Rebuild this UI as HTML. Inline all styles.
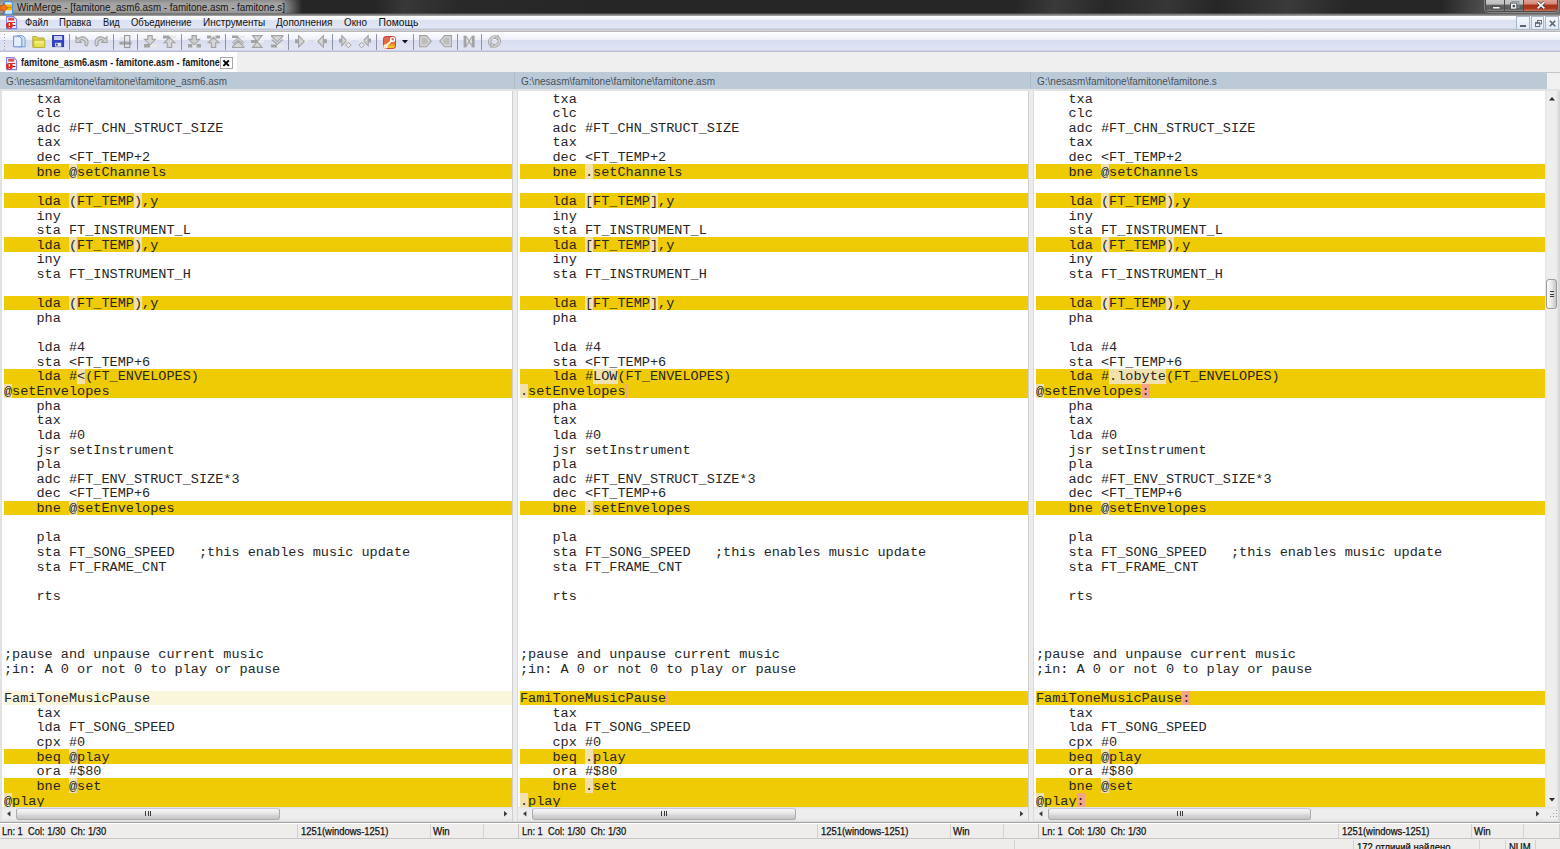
<!DOCTYPE html>
<html><head><meta charset="utf-8">
<style>
*{box-sizing:border-box}
html,body{margin:0;padding:0}
body{width:1560px;height:849px;overflow:hidden;position:relative;background:#f0f0f0;font-family:"Liberation Sans",sans-serif}
.a{position:absolute}
svg{position:absolute;overflow:visible}
#title{left:0;top:0;width:1560px;height:16px;background:linear-gradient(100deg,#262626 0,#262626 370px,#383838 400px,#2a2a2a 450px,#262626 600px,#262626 1000px,#3a3a3a 1040px,#282828 1090px,#363636 1150px,#262626 1200px,#3a3a3a 1270px,#262626 1330px,#262626 1420px,#606060 1480px,#707070 1560px)}
#glow{left:0;top:0;width:302px;height:14px;background:linear-gradient(to right,rgba(38,38,38,0) 0,rgba(38,38,38,0) 93%,#262626 100%),linear-gradient(#8c8c8c 0,#a2a2a2 25%,#a8a8a8 60%,#909090 100%)}
#tbot{left:0;top:13.3px;width:1560px;height:2.4px;background:linear-gradient(rgba(50,50,50,.35),#858585 55%,#a8a8a8)}
.tx{position:absolute;white-space:pre;line-height:12px;transform-origin:0 0}
#menubar{left:0;top:15.5px;width:1560px;height:14.6px;background:linear-gradient(#ffffff 0,#f0f2fb 28%,#dce1f2 31%,#e2e6f4 86%,#b9bfd5 94%,#c8ccd8 100%)}
#mline{left:0;top:30.1px;width:1560px;height:1.6px;background:linear-gradient(#dedede,#ababab)}
.mi{top:16.5px;font-size:10.3px;color:#111}
#toolbar{left:0;top:31.7px;width:1560px;height:20px;background:linear-gradient(#ffffff 0,#eef0fb 38%,#d9ddf0 40%,#e0e4f3 90%,#b4bad0 96%,#c4c8d6 100%)}
.sep{position:absolute;top:34px;width:1px;height:16px;background:#8a92a4}
#tabbar{left:0;top:51.7px;width:1560px;height:20.6px;background:#efefef}
#tab{left:0;top:51.7px;width:237px;height:20.6px;background:#fff}
#tabtext{left:20.6px;top:56.9px;width:228px;overflow:hidden;font-size:10.3px;font-weight:bold;color:#1a1a1a;transform:scaleX(.88)}
#tabx{left:220.4px;top:57.2px;width:12.3px;height:12.3px;border:1px solid #a8a8a8;background:#fff}
#hdr{left:0;top:72.3px;width:1547px;height:16.7px;background:#bccad8}
#hdr2{left:1547px;top:72.3px;width:13px;height:1px;background:#c4c4c4}
.hdiv{position:absolute;top:72.3px;width:1px;height:16.7px;background:#aebdcb}
.htxt{top:74.96px;font-size:10.8px;color:#46515c}
#hgap{left:0;top:89px;width:1560px;height:1.7px;background:#e3e3e3}
.pw{position:absolute;top:90.7px;height:717px;background:#fff}
.psep{position:absolute;top:90.7px;height:732px}
.pane{position:absolute;top:91px;height:716px;overflow:hidden}
.bg{position:absolute;left:0;right:0;height:14.625px}
.y{background:#efcb05}
.c{background:#f9f6dc}
.w{position:absolute;height:14.625px;background:#f1e2ad}
.p{position:absolute;height:14.625px;background:#f3a38a}
.m{position:absolute;height:14.625px;width:1px;background:#f3a38a}
.t{position:absolute;left:0;white-space:pre;font-family:"Liberation Mono",monospace;font-size:12px;line-height:14.625px;color:#262626;transform:scaleX(1.12826);transform-origin:0 0}
#vsb{left:1545px;top:90.7px;width:13px;height:716.5px;background:linear-gradient(to right,#e4e4e4,#eeeeee 20%,#eeeeee 80%,#e4e4e4)}
#rborder{left:1558px;top:90.7px;width:2px;height:732px;background:#d8d8d8}
.hsb{position:absolute;top:807.2px;height:13.5px;background:linear-gradient(#e2e2e2,#eeeeee 20%,#eeeeee 80%,#e4e4e4)}
.thumbh{position:absolute;top:807.6px;height:12.3px;border:1px solid #acacac;border-top-color:#c6cad6;border-radius:3px;background:linear-gradient(#f6f6f6,#ebebeb 35%,#d2d2d4 70%,#c4c4c8)}
#sline{left:0;top:821.6px;width:1560px;height:1.4px;background:#a4a4a4}
#sline0{left:0;top:820.5px;width:1560px;height:1.1px;background:#dcdcdc}
#status{left:0;top:823px;width:1560px;height:14.8px;background:linear-gradient(#ffffff 0,#ffffff 1px,#eeedeb 1.5px)}
#sline2{left:0;top:837.7px;width:1560px;height:1.5px;background:#c8c7c5}
#status2{left:0;top:839.2px;width:1560px;height:10px;background:#eeedeb}
.sdiv{position:absolute;width:1px;background:#d4d2d0}
.stxt{top:825.1px;font-size:10.5px;color:#111;-webkit-text-stroke:0.25px #111}
</style></head><body>
<div id="title" class="a"></div>
<div id="glow" class="a"></div>
<div id="tbot" class="a"></div>
<svg style="left:0px;top:1px" width="13" height="13" viewBox="0 0 13 13">
<path d="M4.6 0.6h6.2l1.8 1.8v10.8h-8z" fill="#cfe6fb" stroke="#4b92d6" stroke-width="1.1"/>
<rect x="5.3" y="3.6" width="6.6" height="5.6" fill="#f2b400"/>
<rect x="5.3" y="6" width="6.6" height="1" fill="#d89000"/>
<path d="M0 4.6h3.2V2.2L7.6 6.9 3.2 11.6V9.2H0z" fill="#ec7a18" stroke="#b83a10" stroke-width="0.6"/>
</svg>
<div class="tx" id="ttext" style="left:17.3px;top:1.8px;font-size:10px;color:#141414;transform:scaleX(.978)">WinMerge - [famitone_asm6.asm - famitone.asm - famitone.s]</div>
<div class="a" style="left:1485.3px;top:-2px;width:72.7px;height:14px;border:1px solid #4a4a4a;border-radius:0 0 4px 4px;box-shadow:0 0 0 1px rgba(190,190,190,.45);overflow:hidden"><div class="a" style="left:0;top:0;width:19px;height:13px;background:linear-gradient(#cacaca 0,#c0c0c0 38%,#626262 48%,#5c5c5c 75%,#8a8a8a 92%,#707070 100%);border-right:1px solid #4a4a4a"></div><div class="a" style="left:19px;top:0;width:19px;height:13px;background:linear-gradient(#cacaca 0,#c0c0c0 38%,#626262 48%,#5c5c5c 75%,#8a8a8a 92%,#707070 100%);border-right:1px solid #4a4a4a"></div><div class="a" style="left:38px;top:0;width:33px;height:13px;background:linear-gradient(#e0a898 0,#d48878 38%,#a83018 48%,#b03a20 75%,#d07a60 92%,#a04030 100%)"></div></div><svg style="left:1492px;top:5.5px" width="9" height="3.6" viewBox="0 0 9 3.6"><rect x="0.5" y="0.5" width="7.6" height="2.5" fill="#f4f4f4" stroke="#3c4048" stroke-width="0.8"/></svg><svg style="left:1510.2px;top:0.8px" width="10" height="9" viewBox="0 0 10 9"><rect x="2" y="0.6" width="6.8" height="5.8" fill="none" stroke="#8d929c" stroke-width="1.1"/><rect x="0.6" y="2.1" width="6.2" height="6" fill="#ececec" stroke="#3c4048" stroke-width="0.7"/><rect x="2.7" y="4" width="2.2" height="2.2" fill="#3c4048"/></svg><svg style="left:1535.5px;top:1px" width="10" height="8.5" viewBox="0 0 10 8.5"><path d="M1.6 1.2l6.8 6.1M8.4 1.2l-6.8 6.1" stroke="#3c3c44" stroke-width="3"/><path d="M1.6 1.2l6.8 6.1M8.4 1.2l-6.8 6.1" stroke="#f6f6f6" stroke-width="1.8"/></svg>
<div id="menubar" class="a"></div>
<div id="mline" class="a"></div>
<svg style="left:6px;top:16.4px" width="11" height="13" viewBox="0 0 11 13">
<path d="M0.6 0.6h7.2l2.8 2.8v9.2h-10z" fill="#f4f2ff" stroke="#7f80f2" stroke-width="1.1"/>
<rect x="2.2" y="1.8" width="6" height="2.8" fill="#d8504c"/>
<rect x="2.4" y="6" width="7" height="1" fill="#c83838"/>
<rect x="5.5" y="9" width="4" height="1.1" fill="#8a2a2a"/>
<circle cx="3.4" cy="9.3" r="3.4" fill="#e4271c"/>
<path d="M3.4 6.9v2.9M3.4 10.9v1.1" stroke="#fff" stroke-width="1.3"/>
</svg>
<span class="tx mi" style="left:24.9px;transform:scaleX(.916)">Файл</span>
<span class="tx mi" style="left:59.4px;transform:scaleX(.929)">Правка</span>
<span class="tx mi" style="left:103.1px;transform:scaleX(.90)">Вид</span>
<span class="tx mi" style="left:131.2px;transform:scaleX(.918)">Объединение</span>
<span class="tx mi" style="left:203px;transform:scaleX(.97)">Инструменты</span>
<span class="tx mi" style="left:276.2px;transform:scaleX(.967)">Дополнения</span>
<span class="tx mi" style="left:344px;transform:scaleX(.958)">Окно</span>
<span class="tx mi" style="left:378.5px;transform:scaleX(1.0)">Помощь</span>
<div class="a" style="left:1516.4px;top:16.4px;width:13.3px;height:13.3px;border:1px solid #a9b9cb;background:linear-gradient(#f4f8fd,#dfe9f6)"></div><div class="a" style="left:1530.9px;top:16.4px;width:13.3px;height:13.3px;border:1px solid #a9b9cb;background:linear-gradient(#f4f8fd,#dfe9f6)"></div><div class="a" style="left:1545.3px;top:16.4px;width:13.3px;height:13.3px;border:1px solid #a9b9cb;background:linear-gradient(#f4f8fd,#dfe9f6)"></div><div class="a" style="left:1520px;top:25px;width:5.5px;height:2px;background:#5a6470"></div><svg style="left:1534.8px;top:20px" width="7" height="7" viewBox="0 0 7 7"><rect x="2.4" y="0.5" width="4.1" height="3.4" fill="none" stroke="#5a6470" stroke-width="0.9"/><rect x="0.5" y="2.6" width="4.2" height="3.9" fill="#e8eef8" stroke="#5a6470" stroke-width="0.9"/><rect x="0.5" y="2.6" width="4.2" height="1.2" fill="#5a6470"/></svg><svg style="left:1548.5px;top:19.5px" width="7" height="7" viewBox="0 0 7 7"><path d="M0.8 0.8l5.4 5.4M6.2 0.8l-5.4 5.4" stroke="#5a6470" stroke-width="1.6"/></svg>
<div id="toolbar" class="a"></div>
<div class="a" style="left:3.5px;top:33.8px;width:1.5px;height:1.2px;background:#9aa0b0"></div><div class="a" style="left:3.5px;top:36.8px;width:1.5px;height:1.2px;background:#9aa0b0"></div><div class="a" style="left:3.5px;top:39.8px;width:1.5px;height:1.2px;background:#9aa0b0"></div><div class="a" style="left:3.5px;top:42.8px;width:1.5px;height:1.2px;background:#9aa0b0"></div><div class="a" style="left:3.5px;top:45.8px;width:1.5px;height:1.2px;background:#9aa0b0"></div><div class="a" style="left:3.5px;top:48.8px;width:1.5px;height:1.2px;background:#9aa0b0"></div><svg style="left:12.5px;top:35px" width="13" height="13" viewBox="0 0 13 13"><path d="M4.5 0.6h5l2.6 2.6v8.6h-7.6z" fill="#cfe0f8" stroke="#7d9fd8"/><path d="M0.6 1.2h5.6l2.6 2.6v8h-8.2z" fill="#e4effc" stroke="#6a8ed2"/></svg><svg style="left:31.5px;top:35px" width="13" height="13" viewBox="0 0 13 13"><path d="M0.8 1.6h4l1.2 1.4h6v9.2H0.8z" fill="#dcd84a" stroke="#b2aa2c"/><path d="M1.8 5h11v7.5H1.8z" fill="#e8e050" stroke="#bab230"/><rect x="2.5" y="6" width="9.5" height="2.5" fill="#f2ec80"/></svg><svg style="left:51.5px;top:35px" width="13" height="13" viewBox="0 0 13 13"><rect x="0.6" y="0.6" width="11" height="11" fill="#3444c4" stroke="#2a36a8"/><rect x="2" y="1" width="8.2" height="4" fill="#c8cff2"/><rect x="3.2" y="7.8" width="6" height="3.8" fill="#e6e8fa"/><rect x="4.2" y="8.6" width="1.4" height="2" fill="#222"/></svg><div class="sep" style="left:69px"></div><svg style="left:75.2px;top:35px" width="13" height="13" viewBox="0 0 13 13"><path d="M1 1.8v5.6h5.4L4.6 5.6a3.4 3.4 0 0 1 5.2 4.2l2 1.2A5.6 5.6 0 0 0 3.1 3.9z" fill="#d6d6d6" stroke="#a3a3a3" stroke-width="1.1"/></svg><svg style="left:95.2px;top:35px" width="13" height="13" viewBox="0 0 13 13"><path d="M12 1.8v5.6H6.6l1.8-1.8a3.4 3.4 0 0 0-5.2 4.2l-2 1.2A5.6 5.6 0 0 1 9.9 3.9z" fill="#d6d6d6" stroke="#a3a3a3" stroke-width="1.1"/></svg><div class="sep" style="left:113px"></div><svg style="left:119px;top:35px" width="13" height="13" viewBox="0 0 13 13"><rect x="0.5" y="2.2" width="11" height="3" fill="#e9e9e9"/><rect x="0.5" y="6.6" width="12" height="3" fill="#a3a3a3"/><rect x="5.6" y="0.6" width="5.2" height="12" fill="none" stroke="#8e8e8e" stroke-width="1"/></svg><div class="sep" style="left:137px"></div><svg style="left:143.8px;top:35px" width="13" height="13" viewBox="0 0 13 13"><rect x="0" y="9" width="6" height="3.5" fill="#a3a3a3"/><rect x="6" y="9" width="7" height="3.5" fill="#e9e9e9"/><path d="M3.8 0.6h4.4v3.8h3.2L6 9.8 0.6 4.4h3.2z" fill="#d6d6d6" stroke="#a3a3a3" stroke-width="1.1"/></svg><svg style="left:163px;top:35px" width="13" height="13" viewBox="0 0 13 13"><rect x="0" y="0.5" width="6.5" height="3" fill="#a3a3a3"/><rect x="6.5" y="0.5" width="6.5" height="3" fill="#e9e9e9"/><path d="M6.5 2.4l5.4 5.4H8.7v4.6H4.3V7.8H1.1z" fill="#d6d6d6" stroke="#a3a3a3" stroke-width="1.1"/></svg><div class="sep" style="left:181.3px"></div><svg style="left:188px;top:35px" width="13" height="13" viewBox="0 0 13 13"><rect x="0" y="9" width="4.5" height="3.5" fill="#a3a3a3"/><rect x="4.5" y="9" width="4" height="3.5" fill="#e9e9e9"/><rect x="8.5" y="9" width="4.5" height="3.5" fill="#a3a3a3"/><path d="M4 0.6h4.4v3.8h3.2L6.2 9.8 0.8 4.4H4z" fill="#cdcdcd" stroke="#a3a3a3" stroke-width="1.1"/></svg><svg style="left:207px;top:35px" width="13" height="13" viewBox="0 0 13 13"><rect x="0" y="0.5" width="4.5" height="3" fill="#a3a3a3"/><rect x="4.5" y="0.5" width="4" height="3" fill="#e9e9e9"/><rect x="8.5" y="0.5" width="4.5" height="3" fill="#a3a3a3"/><path d="M6.5 2.4l5.4 5.4H8.7v4.6H4.3V7.8H1.1z" fill="#d6d6d6" stroke="#a3a3a3" stroke-width="1.1"/></svg><div class="sep" style="left:225.2px"></div><svg style="left:231.5px;top:35px" width="13" height="13" viewBox="0 0 13 13"><rect x="0" y="0.5" width="6" height="2.5" fill="#a3a3a3"/><rect x="6" y="0.5" width="7" height="2.5" fill="#e9e9e9"/><path d="M6.2 2.6l5.6 5-1.2 1.2-4.4-3.9-4.4 3.9L0.6 7.6z" fill="#d6d6d6" stroke="#a3a3a3" stroke-width="1"/><path d="M6.2 6.4l5.6 5.2v0.9H0.6v-0.9z" fill="#d6d6d6" stroke="#a3a3a3" stroke-width="1.1"/></svg><svg style="left:250.9px;top:35px" width="13" height="13" viewBox="0 0 13 13"><rect x="0" y="5" width="6.5" height="3" fill="#a3a3a3"/><rect x="6.5" y="5" width="6.5" height="3" fill="#e9e9e9"/><path d="M1.5 0.6h9.6L6.3 6.4zM1.5 12.4h9.6L6.3 6.6z" fill="#d6d6d6" stroke="#a3a3a3" stroke-width="1.1"/></svg><svg style="left:270.5px;top:35px" width="13" height="13" viewBox="0 0 13 13"><rect x="0" y="9.5" width="6" height="3" fill="#a3a3a3"/><rect x="6" y="9.5" width="7" height="3" fill="#e9e9e9"/><path d="M0.6 0.6h11.2v0.9L6.2 6.6 0.6 1.5z" fill="#d6d6d6" stroke="#a3a3a3" stroke-width="1.1"/><path d="M0.6 4.6l5.6 4.6 5.6-4.6" fill="none" stroke="#a3a3a3" stroke-width="1.3"/></svg><div class="sep" style="left:288.3px"></div><svg style="left:294.6px;top:35px" width="13" height="13" viewBox="0 0 13 13"><rect x="0" y="4.2" width="4" height="4" fill="#a3a3a3"/><rect x="8.5" y="4.6" width="4.5" height="3" fill="#e9e9e9"/><path d="M3.6 0.6l5.6 5.8-5.6 5.8z" fill="#d6d6d6" stroke="#a3a3a3" stroke-width="1.1"/></svg><svg style="left:314px;top:35px" width="13" height="13" viewBox="0 0 13 13"><rect x="9" y="4.2" width="4" height="4" fill="#a3a3a3"/><rect x="0" y="4.6" width="4.5" height="3" fill="#e9e9e9"/><path d="M9.4 0.6L3.8 6.4l5.6 5.8z" fill="#d6d6d6" stroke="#a3a3a3" stroke-width="1.1"/></svg><div class="sep" style="left:332.3px"></div><svg style="left:338.8px;top:35px" width="13" height="13" viewBox="0 0 13 13"><rect x="0" y="3.6" width="3.5" height="4" fill="#a3a3a3"/><path d="M2.8 0.6l4.8 5-4.8 5z" fill="#d6d6d6" stroke="#a3a3a3" stroke-width="1.1"/><rect x="7.5" y="3.8" width="5" height="3" fill="#e9e9e9"/><path d="M9.3 7.4l2.7 2.7-2.7 2.7-2.7-2.7z" fill="#e9e9e9" stroke="#a3a3a3" stroke-width="1"/></svg><svg style="left:358px;top:35px" width="13" height="13" viewBox="0 0 13 13"><rect x="9.5" y="3.6" width="3.5" height="4" fill="#a3a3a3"/><path d="M10.2 0.6L5.4 5.6l4.8 5z" fill="#d6d6d6" stroke="#a3a3a3" stroke-width="1.1"/><rect x="0.5" y="3.8" width="5" height="3" fill="#e9e9e9"/><path d="M3.7 7.4l2.7 2.7-2.7 2.7L1 10.1z" fill="#e9e9e9" stroke="#a3a3a3" stroke-width="1"/></svg><div class="sep" style="left:376.3px"></div><svg style="left:383.2px;top:35.5px" width="13" height="13" viewBox="0 0 13 13"><defs><linearGradient id="og" x1="0" y1="0" x2="0" y2="1"><stop offset="0" stop-color="#d86a6a"/><stop offset="0.5" stop-color="#ee6a30"/><stop offset="1" stop-color="#f8e820"/></linearGradient></defs><rect x="0.6" y="0.6" width="11.8" height="11.8" rx="2" fill="url(#og)" stroke="#c83c30" stroke-width="1"/><path d="M2.4 10.6L9.2 3.8" stroke="#fff" stroke-width="1.8"/><circle cx="9.6" cy="3.4" r="2" fill="none" stroke="#fff" stroke-width="1.3"/><circle cx="2.4" cy="10.6" r="1.5" fill="none" stroke="#fff" stroke-width="1.1"/></svg><svg style="left:402.2px;top:40.2px" width="6" height="4" viewBox="0 0 6 4"><path d="M0 0h6L3 3.6z" fill="#111"/></svg><div class="sep" style="left:413px"></div><svg style="left:419px;top:35px" width="13" height="13" viewBox="0 0 13 13"><path d="M0.6 0.6h6.8l4.8 5.6-4.8 5.6H0.6z" fill="#d6d6d6" stroke="#a3a3a3" stroke-width="1.1"/><path d="M2.6 3v6.4h4.4l2.6-3.2-2.6-3.2z" fill="#bdbdbd"/></svg><svg style="left:439px;top:35px" width="13" height="13" viewBox="0 0 13 13"><path d="M12.4 0.6H5.6L0.8 6.2l4.8 5.6h6.8z" fill="#d6d6d6" stroke="#a3a3a3" stroke-width="1.1"/><path d="M10.4 3v6.4H6L3.4 6.2 6 3z" fill="#bdbdbd"/></svg><div class="sep" style="left:456.7px"></div><svg style="left:463px;top:35px" width="13" height="13" viewBox="0 0 13 13"><rect x="0.6" y="0.6" width="3" height="11.8" fill="#a3a3a3"/><rect x="8.6" y="0.6" width="3" height="11.8" fill="#a3a3a3"/><path d="M3.6 2l2.5 4.2L3.6 10.4M8.6 2L6.1 6.2l2.5 4.2" fill="#e9e9e9" stroke="#a3a3a3" stroke-width="1.1"/></svg><div class="sep" style="left:481.2px"></div><svg style="left:487.5px;top:35px" width="13" height="13" viewBox="0 0 13 13"><g transform="rotate(-35 6.5 6.5)"><path d="M1.2 7.2A5.2 5.2 0 0 1 10.6 4.2" fill="none" stroke="#a3a3a3" stroke-width="3.2"/><path d="M1.2 7.2A5.2 5.2 0 0 1 10.6 4.2" fill="none" stroke="#d6d6d6" stroke-width="1.6"/><path d="M8.2 3.6h5l-2.5 3.6z" fill="#d6d6d6" stroke="#a3a3a3" stroke-width="0.9"/><path d="M11.8 5.8A5.2 5.2 0 0 1 2.4 8.8" fill="none" stroke="#a3a3a3" stroke-width="3.2"/><path d="M11.8 5.8A5.2 5.2 0 0 1 2.4 8.8" fill="none" stroke="#d6d6d6" stroke-width="1.6"/><path d="M4.8 9.4h-5l2.5-3.6z" fill="#d6d6d6" stroke="#a3a3a3" stroke-width="0.9"/></g></svg>
<div id="tabbar" class="a"></div>
<div id="tab" class="a"></div>
<svg style="left:6px;top:57px" width="11" height="13" viewBox="0 0 11 13">
<path d="M0.6 0.6h7.2l2.8 2.8v9.2h-10z" fill="#f4f2ff" stroke="#7f80f2" stroke-width="1.1"/>
<rect x="2.2" y="1.8" width="6" height="2.8" fill="#d8504c"/>
<rect x="2.4" y="6" width="7" height="1" fill="#c83838"/>
<rect x="5.5" y="9" width="4" height="1.1" fill="#8a2a2a"/>
<circle cx="3.4" cy="9.3" r="3.4" fill="#e4271c"/>
<path d="M3.4 6.9v2.9M3.4 10.9v1.1" stroke="#fff" stroke-width="1.3"/>
</svg>
<div class="tx" id="tabtext">famitone_asm6.asm - famitone.asm - famitone.s</div>
<div id="tabx" class="a"></div>
<svg style="left:220.4px;top:57.2px" width="12.3" height="12.3" viewBox="0 0 12.3 12.3"><path d="M3.4 3.4l5.5 5.5M8.9 3.4l-5.5 5.5" stroke="#000" stroke-width="2"/></svg>
<div id="hdr" class="a"></div>
<div id="hdr2" class="a"></div>
<div class="hdiv" style="left:514px"></div>
<div class="hdiv" style="left:1030px"></div>
<div class="tx htxt" style="left:6.2px;transform:scaleX(.916)">G:\nesasm\famitone\famitone\famitone_asm6.asm</div>
<div class="tx htxt" style="left:520.6px;transform:scaleX(.929)">G:\nesasm\famitone\famitone\famitone.asm</div>
<div class="tx htxt" style="left:1036.6px;transform:scaleX(.928)">G:\nesasm\famitone\famitone\famitone.s</div>
<div id="hgap" class="a"></div>
<div class="psep" style="left:0;width:2px;background:#e2e2e2"></div>
<div class="pw" style="left:2px;width:510px"></div>
<div class="psep" style="left:512px;width:6px;background:linear-gradient(to right,#cfcfcf 0,#cfcfcf 1px,#ececec 1px,#ececec 5px,#dadada 5px)"></div>
<div class="pw" style="left:518px;width:510px"></div>
<div class="psep" style="left:1028px;width:6px;background:linear-gradient(to right,#cfcfcf 0,#cfcfcf 1px,#ececec 1px,#ececec 5px,#dadada 5px)"></div>
<div class="pw" style="left:1034px;width:511px"></div>
<div class="pane" style="left:4px;width:508px"><div class="bg y" style="top:73.125px"></div><div class="w" style="top:73.125px;left:65.000px;width:8.125px"></div><div class="bg y" style="top:102.375px"></div><div class="w" style="top:102.375px;left:65.000px;width:8.125px"></div><div class="w" style="top:102.375px;left:130.000px;width:8.125px"></div><div class="bg y" style="top:146.250px"></div><div class="w" style="top:146.250px;left:65.000px;width:8.125px"></div><div class="w" style="top:146.250px;left:130.000px;width:8.125px"></div><div class="bg y" style="top:204.750px"></div><div class="w" style="top:204.750px;left:65.000px;width:8.125px"></div><div class="w" style="top:204.750px;left:130.000px;width:8.125px"></div><div class="bg y" style="top:277.875px"></div><div class="w" style="top:277.875px;left:73.125px;width:8.125px"></div><div class="bg y" style="top:292.500px"></div><div class="w" style="top:292.500px;left:0.000px;width:8.125px"></div><div class="bg y" style="top:409.500px"></div><div class="w" style="top:409.500px;left:65.000px;width:8.125px"></div><div class="bg c" style="top:599.625px"></div><div class="bg y" style="top:658.125px"></div><div class="w" style="top:658.125px;left:65.000px;width:8.125px"></div><div class="bg y" style="top:687.375px"></div><div class="w" style="top:687.375px;left:65.000px;width:8.125px"></div><div class="bg y" style="top:702.000px"></div><div class="w" style="top:702.000px;left:0.000px;width:8.125px"></div><div class="t" style="top:1.50px">    txa
    clc
    adc #FT_CHN_STRUCT_SIZE
    tax
    dec &lt;FT_TEMP+2
    bne @setChannels

    lda (FT_TEMP),y
    iny
    sta FT_INSTRUMENT_L
    lda (FT_TEMP),y
    iny
    sta FT_INSTRUMENT_H

    lda (FT_TEMP),y
    pha

    lda #4
    sta &lt;FT_TEMP+6
    lda #&lt;(FT_ENVELOPES)
@setEnvelopes
    pha
    tax
    lda #0
    jsr setInstrument
    pla
    adc #FT_ENV_STRUCT_SIZE*3
    dec &lt;FT_TEMP+6
    bne @setEnvelopes

    pla
    sta FT_SONG_SPEED   ;this enables music update
    sta FT_FRAME_CNT

    rts



;pause and unpause current music
;in: A 0 or not 0 to play or pause

FamiToneMusicPause
    tax
    lda FT_SONG_SPEED
    cpx #0
    beq @play
    ora #$80
    bne @set
@play</div></div><div class="pane" style="left:520px;width:508px"><div class="bg y" style="top:73.125px"></div><div class="w" style="top:73.125px;left:65.000px;width:8.125px"></div><div class="bg y" style="top:102.375px"></div><div class="w" style="top:102.375px;left:65.000px;width:8.125px"></div><div class="w" style="top:102.375px;left:130.000px;width:8.125px"></div><div class="bg y" style="top:146.250px"></div><div class="w" style="top:146.250px;left:65.000px;width:8.125px"></div><div class="w" style="top:146.250px;left:130.000px;width:8.125px"></div><div class="bg y" style="top:204.750px"></div><div class="w" style="top:204.750px;left:65.000px;width:8.125px"></div><div class="w" style="top:204.750px;left:130.000px;width:8.125px"></div><div class="bg y" style="top:277.875px"></div><div class="w" style="top:277.875px;left:73.125px;width:24.375px"></div><div class="bg y" style="top:292.500px"></div><div class="w" style="top:292.500px;left:0.000px;width:8.125px"></div><div class="m" style="top:292.500px;left:105.625px"></div><div class="bg y" style="top:409.500px"></div><div class="w" style="top:409.500px;left:65.000px;width:8.125px"></div><div class="bg y" style="top:599.625px"></div><div class="m" style="top:599.625px;left:146.250px"></div><div class="bg y" style="top:658.125px"></div><div class="w" style="top:658.125px;left:65.000px;width:8.125px"></div><div class="bg y" style="top:687.375px"></div><div class="w" style="top:687.375px;left:65.000px;width:8.125px"></div><div class="bg y" style="top:702.000px"></div><div class="w" style="top:702.000px;left:0.000px;width:8.125px"></div><div class="m" style="top:702.000px;left:40.625px"></div><div class="t" style="top:1.50px">    txa
    clc
    adc #FT_CHN_STRUCT_SIZE
    tax
    dec &lt;FT_TEMP+2
    bne .setChannels

    lda [FT_TEMP],y
    iny
    sta FT_INSTRUMENT_L
    lda [FT_TEMP],y
    iny
    sta FT_INSTRUMENT_H

    lda [FT_TEMP],y
    pha

    lda #4
    sta &lt;FT_TEMP+6
    lda #LOW(FT_ENVELOPES)
.setEnvelopes
    pha
    tax
    lda #0
    jsr setInstrument
    pla
    adc #FT_ENV_STRUCT_SIZE*3
    dec &lt;FT_TEMP+6
    bne .setEnvelopes

    pla
    sta FT_SONG_SPEED   ;this enables music update
    sta FT_FRAME_CNT

    rts



;pause and unpause current music
;in: A 0 or not 0 to play or pause

FamiToneMusicPause
    tax
    lda FT_SONG_SPEED
    cpx #0
    beq .play
    ora #$80
    bne .set
.play</div></div><div class="pane" style="left:1036px;width:509px"><div class="bg y" style="top:73.125px"></div><div class="w" style="top:73.125px;left:65.000px;width:8.125px"></div><div class="bg y" style="top:102.375px"></div><div class="w" style="top:102.375px;left:65.000px;width:8.125px"></div><div class="w" style="top:102.375px;left:130.000px;width:8.125px"></div><div class="bg y" style="top:146.250px"></div><div class="w" style="top:146.250px;left:65.000px;width:8.125px"></div><div class="w" style="top:146.250px;left:130.000px;width:8.125px"></div><div class="bg y" style="top:204.750px"></div><div class="w" style="top:204.750px;left:65.000px;width:8.125px"></div><div class="w" style="top:204.750px;left:130.000px;width:8.125px"></div><div class="bg y" style="top:277.875px"></div><div class="w" style="top:277.875px;left:73.125px;width:56.875px"></div><div class="bg y" style="top:292.500px"></div><div class="w" style="top:292.500px;left:0.000px;width:8.125px"></div><div class="p" style="top:292.500px;left:105.625px;width:8.125px"></div><div class="bg y" style="top:409.500px"></div><div class="w" style="top:409.500px;left:65.000px;width:8.125px"></div><div class="bg y" style="top:599.625px"></div><div class="p" style="top:599.625px;left:146.250px;width:8.125px"></div><div class="bg y" style="top:658.125px"></div><div class="w" style="top:658.125px;left:65.000px;width:8.125px"></div><div class="bg y" style="top:687.375px"></div><div class="w" style="top:687.375px;left:65.000px;width:8.125px"></div><div class="bg y" style="top:702.000px"></div><div class="w" style="top:702.000px;left:0.000px;width:8.125px"></div><div class="p" style="top:702.000px;left:40.625px;width:8.125px"></div><div class="t" style="top:1.50px">    txa
    clc
    adc #FT_CHN_STRUCT_SIZE
    tax
    dec &lt;FT_TEMP+2
    bne @setChannels

    lda (FT_TEMP),y
    iny
    sta FT_INSTRUMENT_L
    lda (FT_TEMP),y
    iny
    sta FT_INSTRUMENT_H

    lda (FT_TEMP),y
    pha

    lda #4
    sta &lt;FT_TEMP+6
    lda #.lobyte(FT_ENVELOPES)
@setEnvelopes:
    pha
    tax
    lda #0
    jsr setInstrument
    pla
    adc #FT_ENV_STRUCT_SIZE*3
    dec &lt;FT_TEMP+6
    bne @setEnvelopes

    pla
    sta FT_SONG_SPEED   ;this enables music update
    sta FT_FRAME_CNT

    rts



;pause and unpause current music
;in: A 0 or not 0 to play or pause

FamiToneMusicPause:
    tax
    lda FT_SONG_SPEED
    cpx #0
    beq @play
    ora #$80
    bne @set
@play:</div></div>
<div id="vsb" class="a"></div>
<div id="rborder" class="a"></div>
<svg style="left:1549px;top:96.8px" width="6" height="3.5" viewBox="0 0 6 3.5"><path d="M0 3.4L3 0l3 3.4z" fill="#2c2c2c"/></svg><svg style="left:1549px;top:797.8px" width="6" height="3.5" viewBox="0 0 6 3.5"><path d="M0 0h6L3 3.4z" fill="#2c2c2c"/></svg><div class="a" style="left:1545.6px;top:279.4px;width:11.6px;height:30.1px;border:1px solid #9c9c9c;border-radius:3px;background:linear-gradient(to right,#fafafa,#ececec 45%,#d0d0d2 85%,#c4c4c8)"></div><div class="a" style="left:1549.5px;top:291.4px;width:4.5px;height:1px;background:#3a3a3a"></div><div class="a" style="left:1549.5px;top:293.6px;width:4.5px;height:1px;background:#3a3a3a"></div><div class="a" style="left:1549.5px;top:295.8px;width:4.5px;height:1px;background:#3a3a3a"></div>
<div class="hsb" style="left:2px;width:510px"></div>
<div class="hsb" style="left:518px;width:510px"></div>
<div class="hsb" style="left:1034px;width:524px"></div>
<div class="thumbh" style="left:16.3px;width:263.6px"></div>
<div class="thumbh" style="left:532.3px;width:263.6px"></div>
<div class="thumbh" style="left:1048.3px;width:262.6px"></div>
<svg style="left:6.7px;top:811px" width="3.4" height="5.6" viewBox="0 0 3.4 5.6"><path d="M3.4 0L0 2.8l3.4 2.8z" fill="#3a3a3a"/></svg><svg style="left:503.5px;top:811px" width="3.4" height="5.6" viewBox="0 0 3.4 5.6"><path d="M0 0l3.4 2.8L0 5.6z" fill="#3a3a3a"/></svg><div class="a" style="left:145.2px;top:811px;width:1px;height:5px;background:#3a3a3a"></div><div class="a" style="left:147.7px;top:811px;width:1px;height:5px;background:#3a3a3a"></div><div class="a" style="left:150.2px;top:811px;width:1px;height:5px;background:#3a3a3a"></div><svg style="left:522.7px;top:811px" width="3.4" height="5.6" viewBox="0 0 3.4 5.6"><path d="M3.4 0L0 2.8l3.4 2.8z" fill="#3a3a3a"/></svg><svg style="left:1019.5px;top:811px" width="3.4" height="5.6" viewBox="0 0 3.4 5.6"><path d="M0 0l3.4 2.8L0 5.6z" fill="#3a3a3a"/></svg><div class="a" style="left:661.2px;top:811px;width:1px;height:5px;background:#3a3a3a"></div><div class="a" style="left:663.7px;top:811px;width:1px;height:5px;background:#3a3a3a"></div><div class="a" style="left:666.2px;top:811px;width:1px;height:5px;background:#3a3a3a"></div><svg style="left:1038.7px;top:811px" width="3.4" height="5.6" viewBox="0 0 3.4 5.6"><path d="M3.4 0L0 2.8l3.4 2.8z" fill="#3a3a3a"/></svg><svg style="left:1535.8px;top:811px" width="3.4" height="5.6" viewBox="0 0 3.4 5.6"><path d="M0 0l3.4 2.8L0 5.6z" fill="#3a3a3a"/></svg><div class="a" style="left:1177.2px;top:811px;width:1px;height:5px;background:#3a3a3a"></div><div class="a" style="left:1179.7px;top:811px;width:1px;height:5px;background:#3a3a3a"></div><div class="a" style="left:1182.2px;top:811px;width:1px;height:5px;background:#3a3a3a"></div><div class="a" style="left:1555.5px;top:809.5px;width:1.4px;height:1.4px;background:#9a9a9a"></div><div class="a" style="left:1555.5px;top:812.5px;width:1.4px;height:1.4px;background:#9a9a9a"></div><div class="a" style="left:1555.5px;top:815.5px;width:1.4px;height:1.4px;background:#9a9a9a"></div><div class="a" style="left:1552.5px;top:812.5px;width:1.4px;height:1.4px;background:#9a9a9a"></div><div class="a" style="left:1552.5px;top:815.5px;width:1.4px;height:1.4px;background:#9a9a9a"></div><div class="a" style="left:1549.5px;top:815.5px;width:1.4px;height:1.4px;background:#9a9a9a"></div>
<div id="sline0" class="a"></div>
<div id="sline" class="a"></div>
<div id="status" class="a"></div>
<div id="sline2" class="a"></div>
<div id="status2" class="a"></div>
<div class="sdiv" style="left:296.8px;top:823.5px;height:14px"></div><div class="sdiv" style="left:430.2px;top:823.5px;height:14px"></div><div class="sdiv" style="left:482.6px;top:823.5px;height:14px"></div><div class="sdiv" style="left:816.8px;top:823.5px;height:14px"></div><div class="sdiv" style="left:950.2px;top:823.5px;height:14px"></div><div class="sdiv" style="left:1002.6px;top:823.5px;height:14px"></div><div class="sdiv" style="left:1337.5px;top:823.5px;height:14px"></div><div class="sdiv" style="left:1471.2px;top:823.5px;height:14px"></div><div class="sdiv" style="left:1523.3px;top:823.5px;height:14px"></div><div class="sdiv" style="left:1558.5px;top:823.5px;height:14px"></div><div class="sdiv" style="left:517.6px;top:823.5px;height:14px;background:#c8c6c4"></div><div class="sdiv" style="left:1037.6px;top:823.5px;height:14px;background:#c8c6c4"></div><div class="sdiv" style="left:1014.3px;top:840px;height:10px"></div><div class="sdiv" style="left:1352.7px;top:840px;height:10px"></div><div class="sdiv" style="left:1479px;top:840px;height:10px"></div><div class="sdiv" style="left:1505px;top:840px;height:10px"></div><div class="sdiv" style="left:1534.6px;top:840px;height:10px"></div>
<div class="tx stxt" style="left:2px;transform:scaleX(.892)">Ln: 1  Col: 1/30  Ch: 1/30</div>
<div class="tx stxt" style="left:301px;transform:scaleX(.897)">1251(windows-1251)</div>
<div class="tx stxt" style="left:433px;transform:scaleX(.928)">Win</div>
<div class="tx stxt" style="left:521.8px;transform:scaleX(.892)">Ln: 1  Col: 1/30  Ch: 1/30</div>
<div class="tx stxt" style="left:820.9px;transform:scaleX(.897)">1251(windows-1251)</div>
<div class="tx stxt" style="left:953.2px;transform:scaleX(.928)">Win</div>
<div class="tx stxt" style="left:1041.8px;transform:scaleX(.892)">Ln: 1  Col: 1/30  Ch: 1/30</div>
<div class="tx stxt" style="left:1342px;transform:scaleX(.897)">1251(windows-1251)</div>
<div class="tx stxt" style="left:1474px;transform:scaleX(.928)">Win</div>
<div class="tx stxt" style="left:1357px;top:840.5px;transform:scaleX(.9)">172 отличий найдено</div>
<div class="tx stxt" style="left:1509px;top:840.5px;transform:scaleX(.9)">NUM</div>
</body></html>
